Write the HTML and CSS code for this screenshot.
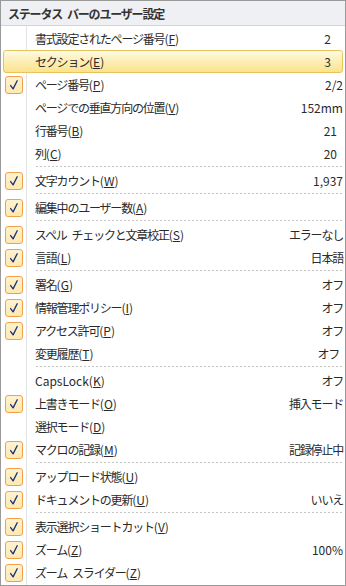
FILE: index.html
```html
<!DOCTYPE html>
<html lang="ja">
<head>
<meta charset="utf-8">
<title>ステータス バーのユーザー設定</title>
<link rel="stylesheet" href="styles.css">
</head>
<body>
<div class="menu">
  <div class="menu__header"><span class="jp">ステータス バーのユーザー設定</span></div>
  <div class="menu__items">
    <div class="row"><span class="row__check"></span><span class="row__label"><span class="jp">書式設定されたページ番号</span>(<u>F</u>)</span><span class="row__value row__value--in12">2</span></div>
    <div class="row row--hot"><span class="row__check"></span><span class="row__label"><span class="jp">セクション</span>(<u>E</u>)</span><span class="row__value row__value--in12">3</span></div>
    <div class="row"><span class="row__check"><span class="box"><svg viewBox="0 0 18 18"><path d="M5.2 9.6 L8 13.4 L12.6 4.2"/></svg></span></span><span class="row__label"><span class="jp">ページ番号</span>(<u>P</u>)</span><span class="row__value">2/2</span></div>
    <div class="row"><span class="row__check"></span><span class="row__label"><span class="jp">ページでの垂直方向の位置</span>(<u>V</u>)</span><span class="row__value">152mm</span></div>
    <div class="row"><span class="row__check"></span><span class="row__label"><span class="jp">行番号</span>(<u>B</u>)</span><span class="row__value row__value--in6">21</span></div>
    <div class="row"><span class="row__check"></span><span class="row__label"><span class="jp">列</span>(<u>C</u>)</span><span class="row__value row__value--in6">20</span></div>
    <div class="sep"></div>
    <div class="row"><span class="row__check"><span class="box"><svg viewBox="0 0 18 18"><path d="M5.2 9.6 L8 13.4 L12.6 4.2"/></svg></span></span><span class="row__label"><span class="jp">文字カウント</span>(<u>W</u>)</span><span class="row__value">1,937</span></div>
    <div class="sep"></div>
    <div class="row"><span class="row__check"><span class="box"><svg viewBox="0 0 18 18"><path d="M5.2 9.6 L8 13.4 L12.6 4.2"/></svg></span></span><span class="row__label"><span class="jp">編集中のユーザー数</span>(<u>A</u>)</span><span class="row__value"></span></div>
    <div class="sep"></div>
    <div class="row"><span class="row__check"><span class="box"><svg viewBox="0 0 18 18"><path d="M5.2 9.6 L8 13.4 L12.6 4.2"/></svg></span></span><span class="row__label"><span class="jp">スペル チェックと文章校正</span>(<u>S</u>)</span><span class="row__value"><span class="jp">エラーなし</span></span></div>
    <div class="row"><span class="row__check"><span class="box"><svg viewBox="0 0 18 18"><path d="M5.2 9.6 L8 13.4 L12.6 4.2"/></svg></span></span><span class="row__label"><span class="jp">言語</span>(<u>L</u>)</span><span class="row__value"><span class="jp">日本語</span></span></div>
    <div class="sep"></div>
    <div class="row"><span class="row__check"><span class="box"><svg viewBox="0 0 18 18"><path d="M5.2 9.6 L8 13.4 L12.6 4.2"/></svg></span></span><span class="row__label"><span class="jp">署名</span>(<u>G</u>)</span><span class="row__value"><span class="jp">オフ</span></span></div>
    <div class="row"><span class="row__check"><span class="box"><svg viewBox="0 0 18 18"><path d="M5.2 9.6 L8 13.4 L12.6 4.2"/></svg></span></span><span class="row__label"><span class="jp">情報管理ポリシー</span>(<u>I</u>)</span><span class="row__value"><span class="jp">オフ</span></span></div>
    <div class="row"><span class="row__check"><span class="box"><svg viewBox="0 0 18 18"><path d="M5.2 9.6 L8 13.4 L12.6 4.2"/></svg></span></span><span class="row__label"><span class="jp">アクセス許可</span>(<u>P</u>)</span><span class="row__value"><span class="jp">オフ</span></span></div>
    <div class="row"><span class="row__check"></span><span class="row__label"><span class="jp">変更履歴</span>(<u>T</u>)</span><span class="row__value row__value--in4"><span class="jp">オフ</span></span></div>
    <div class="sep"></div>
    <div class="row"><span class="row__check"></span><span class="row__label">CapsLock(<u>K</u>)</span><span class="row__value"><span class="jp">オフ</span></span></div>
    <div class="row"><span class="row__check"><span class="box"><svg viewBox="0 0 18 18"><path d="M5.2 9.6 L8 13.4 L12.6 4.2"/></svg></span></span><span class="row__label"><span class="jp">上書きモード</span>(<u>O</u>)</span><span class="row__value"><span class="jp">挿入モード</span></span></div>
    <div class="row"><span class="row__check"></span><span class="row__label"><span class="jp">選択モード</span>(<u>D</u>)</span><span class="row__value"></span></div>
    <div class="row"><span class="row__check"><span class="box"><svg viewBox="0 0 18 18"><path d="M5.2 9.6 L8 13.4 L12.6 4.2"/></svg></span></span><span class="row__label"><span class="jp">マクロの記録</span>(<u>M</u>)</span><span class="row__value"><span class="jp">記録停止中</span></span></div>
    <div class="sep"></div>
    <div class="row"><span class="row__check"><span class="box"><svg viewBox="0 0 18 18"><path d="M5.2 9.6 L8 13.4 L12.6 4.2"/></svg></span></span><span class="row__label"><span class="jp">アップロード状態</span>(<u>U</u>)</span><span class="row__value"></span></div>
    <div class="row"><span class="row__check"><span class="box"><svg viewBox="0 0 18 18"><path d="M5.2 9.6 L8 13.4 L12.6 4.2"/></svg></span></span><span class="row__label"><span class="jp">ドキュメントの更新</span>(<u>U</u>)</span><span class="row__value"><span class="jp">いいえ</span></span></div>
    <div class="sep"></div>
    <div class="row"><span class="row__check"><span class="box"><svg viewBox="0 0 18 18"><path d="M5.2 9.6 L8 13.4 L12.6 4.2"/></svg></span></span><span class="row__label"><span class="jp">表示選択ショートカット</span>(<u>V</u>)</span><span class="row__value"></span></div>
    <div class="row"><span class="row__check"><span class="box"><svg viewBox="0 0 18 18"><path d="M5.2 9.6 L8 13.4 L12.6 4.2"/></svg></span></span><span class="row__label"><span class="jp">ズーム</span>(<u>Z</u>)</span><span class="row__value">100%</span></div>
    <div class="row"><span class="row__check"><span class="box"><svg viewBox="0 0 18 18"><path d="M5.2 9.6 L8 13.4 L12.6 4.2"/></svg></span></span><span class="row__label"><span class="jp">ズーム スライダー</span>(<u>Z</u>)</span><span class="row__value"></span></div>
  </div>
</div>
</body>
</html>
```
FILE: styles.css
```css
html, body {
  margin: 0;
  padding: 0;
  background: #ffffff;
}

.menu {
  width: 346px;
  height: 586px;
  box-sizing: border-box;
  border: 1px solid #9a9a9a;
  background: #ffffff;
  font-family: "Noto Sans CJK JP", "Noto Sans", sans-serif;
  font-size: 12px;
  color: #2a2a2a;
  display: flex;
  flex-direction: column;
}

.jp {
  letter-spacing: -1.2px;
  word-spacing: 3.5px;
}

.menu__header {
  height: 24px;
  flex: none;
  background: #eef0f3;
  border-bottom: 1px solid #d2d4d8;
  display: flex;
  align-items: center;
  padding-left: 7px;
  font-weight: bold;
  color: #333333;
}

.menu__items {
  flex: 1;
  padding-top: 1px;
  background: linear-gradient(to right, transparent 25px, #e2e3e4 25px, #e2e3e4 26px, transparent 26px);
}

.row {
  height: 23px;
  box-sizing: border-box;
  margin: 0 2px;
  border: 1px solid transparent;
  border-radius: 3px;
  display: flex;
  align-items: center;
}

.row--hot {
  border-color: #e6c55f;
  background: linear-gradient(to bottom, #fffae3 0%, #fdefb9 45%, #fce38c 100%);
}

.row__check {
  width: 31px;
  flex: none;
  display: flex;
  align-items: center;
  height: 100%;
}

.box {
  width: 18px;
  height: 18px;
  box-sizing: border-box;
  margin-left: 1px;
  border: 1px solid #f1a14c;
  border-radius: 3px;
  background: linear-gradient(to bottom, #fff2cf 0%, #fde9b2 100%);
  display: flex;
}

.box svg {
  width: 16px;
  height: 16px;
  fill: none;
  stroke: #1f3173;
  stroke-width: 1.5;
  stroke-linecap: round;
  stroke-linejoin: round;
}

.row__label {
  flex: 1;
  white-space: nowrap;
}

.row__value {
  white-space: nowrap;
  margin-right: -1px;
}

.row__value--in12 {
  padding-right: 12px;
}

.row__value--in6 {
  padding-right: 6px;
}

.row__value--in4 {
  padding-right: 4px;
}

u {
  text-decoration: underline;
  text-underline-offset: 1px;
}

.sep {
  height: 4px;
  margin: 0 2px 0 35px;
  background: repeating-linear-gradient(to right, #c6c6c6 0, #c6c6c6 2px, transparent 2px, transparent 4px) 0 1px / 100% 1px no-repeat;
}
```
